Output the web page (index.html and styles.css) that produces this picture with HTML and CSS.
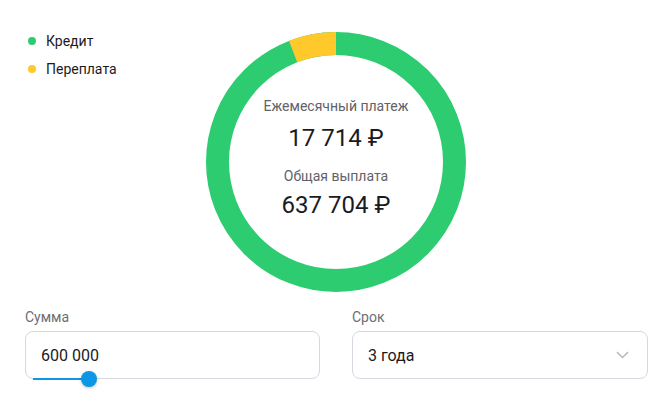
FILE: index.html
```html
<!DOCTYPE html>
<html lang="ru">
<head>
    <meta charset="UTF-8">
    <title>Кредитный калькулятор</title>
    <link rel="stylesheet" href="styles.css">
</head>
<body>
    <div class="calc">
        <div class="top">
            <ul class="legend">
                <li class="legend-item"><span class="dot dot-credit"></span>Кредит</li>
                <li class="legend-item"><span class="dot dot-over"></span>Переплата</li>
            </ul>
            <div class="chart">
                <svg width="260" height="260" viewBox="0 0 260 260">
                    <!-- кредит -->
                    <circle cx="130" cy="130" r="118.5" fill="none" stroke="#2ecc71" stroke-width="23"/>
                    <!-- переплата: 5.9% -->
                    <circle cx="130" cy="130" r="118.5" fill="none" stroke="#ffc82b" stroke-width="23"
                        stroke-dasharray="43.9 800" transform="rotate(-90 130 130) scale(1 -1) translate(0 -260)"/>
                </svg>
                <div class="chart-text">
                    <div class="chart-label">Ежемесячный платеж</div>
                    <div class="chart-value value-1">17 714 ₽</div>
                    <div class="chart-label chart-label-2">Общая выплата</div>
                    <div class="chart-value">637 704 ₽</div>
                </div>
            </div>
            <div></div>
        </div>

        <div class="fields">
            <div class="field">
                <div class="field-label">Сумма</div>
                <div class="field-box">
                    <span class="field-value">600 000</span>
                    <div class="slider">
                        <div class="slider-fill"></div>
                        <div class="slider-thumb"></div>
                    </div>
                </div>
            </div>
            <div class="field">
                <div class="field-label">Срок</div>
                <div class="field-box select-box">
                    <span class="field-value">3 года</span>
                    <svg class="chevron" width="13" height="8" viewBox="0 0 13 8">
                        <path d="M1 1.2 L6.5 6.5 L12 1.2" fill="none" stroke="#b8bbc3" stroke-width="1.6"/>
                    </svg>
                </div>
            </div>
        </div>
    </div>
</body>
</html>
```

FILE: styles.css
```css
body {
    margin: 0;
    background: #fff;
    font-family: Roboto, "Liberation Sans", Arial, sans-serif;
    color: #1b1b1f;
}

.calc {
    width: 672px;
    height: 403px;
}

/* верхняя часть: легенда и диаграмма */
.top {
    display: grid;
    grid-template-columns: 206px 260px 1fr;
    padding-top: 32px;
}

.legend {
    list-style: none;
    margin: 0;
    padding: 0 0 0 28px;
}

.legend-item {
    display: flex;
    align-items: center;
    font-size: 14px;
    height: 20px;
    margin-top: -1px;
    margin-bottom: 9px;
}

.dot {
    width: 8px;
    height: 8px;
    border-radius: 50%;
    margin-right: 10px;
}

.dot-credit {
    background: #2ecc71;
}

.dot-over {
    background: #ffc82b;
}

.chart {
    position: relative;
    width: 260px;
    height: 260px;
}

.chart svg {
    display: block;
}

.chart-text {
    position: absolute;
    inset: 0;
    display: flex;
    flex-direction: column;
    align-items: center;
    padding-top: 64px;
}

.chart-label {
    font-size: 14px;
    color: #5f6269;
    line-height: 20px;
}

.chart-label-2 {
    margin-top: 14px;
}

.chart-value {
    font-size: 24px;
    line-height: 28px;
    margin-top: 5px;
}

.value-1 {
    margin-top: 8px;
}

/* поля ввода */
.fields {
    display: grid;
    grid-template-columns: 295px 296px;
    column-gap: 32px;
    padding: 15px 0 0 25px;
}

.field-label {
    font-size: 14px;
    color: #6b6e76;
    line-height: 20px;
    margin-bottom: 4px;
}

.field-box {
    position: relative;
    box-sizing: border-box;
    height: 48px;
    border: 1px solid #d6d8df;
    border-radius: 8px;
    display: flex;
    align-items: center;
    padding-left: 15px;
}

.field-value {
    font-size: 16px;
}

.select-box {
    justify-content: space-between;
    padding-right: 18px;
}

.slider {
    position: absolute;
    left: 7px;
    right: 7px;
    bottom: -2px;
    height: 2px;
}

.slider-fill {
    width: 56px;
    height: 2px;
    background: #0b97e5;
}

.slider-thumb {
    position: absolute;
    left: 48px;
    top: -7px;
    width: 16px;
    height: 16px;
    border-radius: 50%;
    background: #0b97e5;
    box-shadow: 0 1px 3px rgba(0, 0, 0, 0.25);
}
```
